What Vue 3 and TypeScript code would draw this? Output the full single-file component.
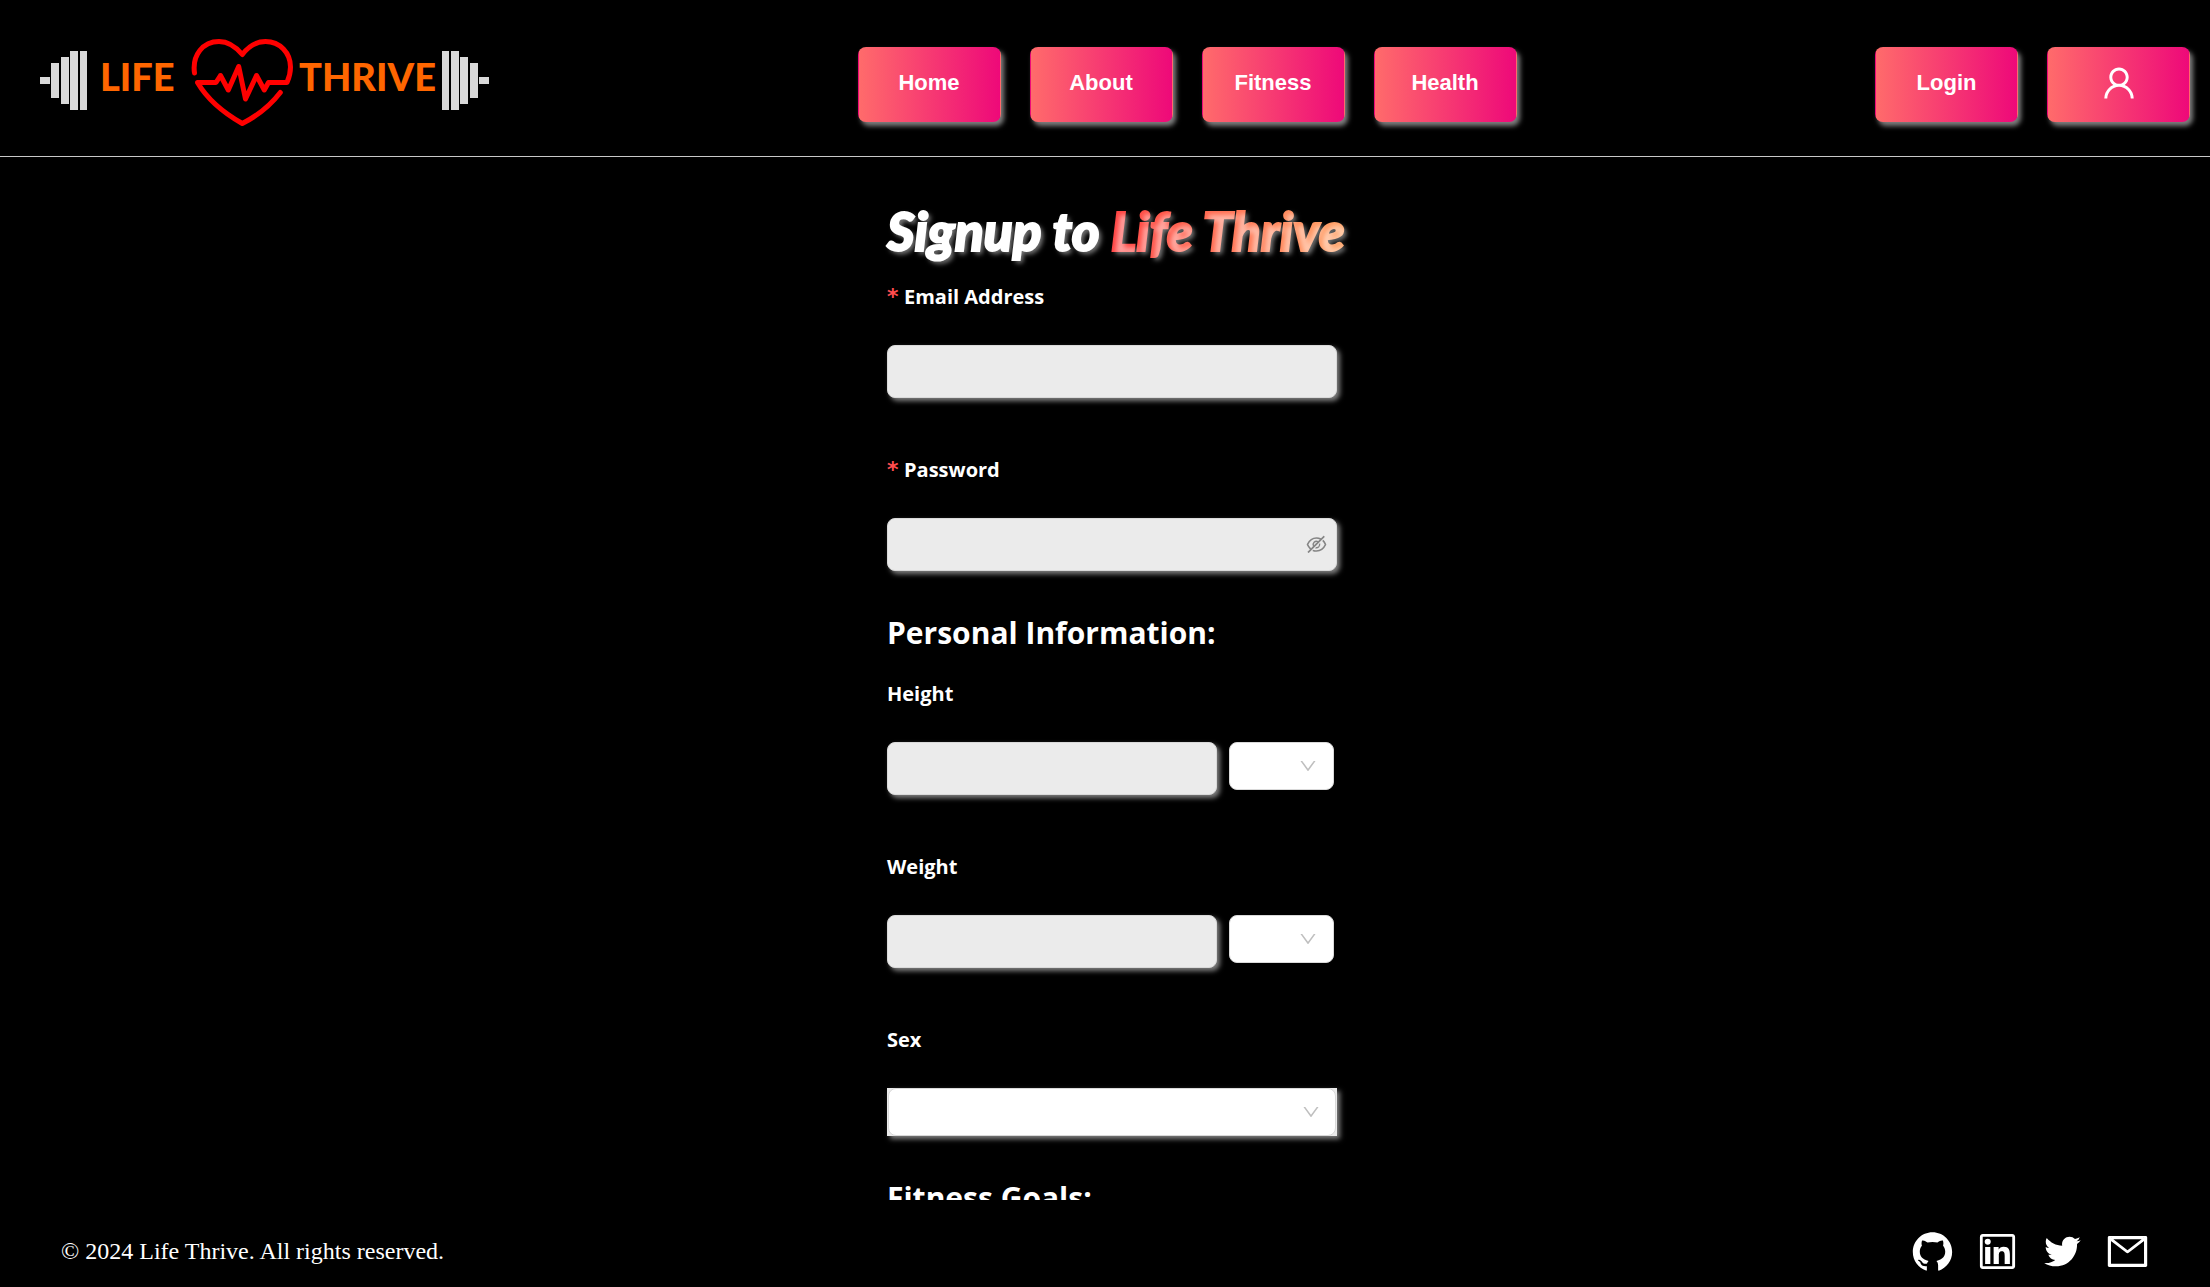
<script setup lang="ts">
import { ref } from 'vue'

interface SocialLink {
  label: string
  path: string
}

const navItems: string[] = ['Home', 'About', 'Fitness', 'Health']

const measures = ref([
  { id: 'height', label: 'Height', value: '', unit: '', units: ['cm', 'in'] },
  { id: 'weight', label: 'Weight', value: '', unit: '', units: ['kg', 'lb'] },
])

const email = ref('')
const password = ref('')
const showPassword = ref(false)
const sex = ref('')

const arrowPath =
  'M884 256h-75c-5.1 0-9.9 2.5-12.9 6.6L512 654.2 227.9 262.6c-3-4.1-7.8-6.6-12.9-6.6h-75c-6.5 0-10.3 7.4-6.5 12.7l352.6 486.1c12.8 17.6 39 17.6 51.7 0l352.6-486.1c3.9-5.3.1-12.7-6.4-12.7z'

const socials: SocialLink[] = [
  {
    label: 'GitHub',
    path: 'M511.6 76.3C264.3 76.2 64 276.4 64 523.5 64 718.9 189.3 885 363.8 946c23.5 5.9 19.9-10.8 19.9-22.2v-77.5c-135.7 15.9-141.2-73.9-150.3-88.9C215 726 171.5 718 184.5 703c30.9-15.9 62.4 4 98.9 57.9 26.4 39.1 77.9 32.5 104 26 5.7-23.5 17.9-44.5 34.7-60.8-140.6-25.2-199.2-111-199.2-213 0-49.5 16.3-95 48.3-131.7-20.4-60.5 1.9-112.3 4.9-120 58.1-5.2 118.5 41.6 123.2 45.3 33-8.9 70.7-13.6 112.9-13.6 42.4 0 80.2 4.9 113.5 13.9 11.3-8.6 67.3-48.8 121.3-43.9 2.9 7.7 24.7 58.3 5.5 118 32.4 36.8 48.9 82.7 48.9 132.3 0 102.2-59 188.1-200 212.9a127.5 127.5 0 0138.1 91v112.5c.8 9 0 17.9 15 17.9 177.1-59.7 304.6-227 304.6-424.1 0-247.2-200.4-447.3-447.5-447.3z',
  },
  {
    label: 'LinkedIn',
    path: 'M847.7 112H176.3c-35.5 0-64.3 28.8-64.3 64.3v671.4c0 35.5 28.8 64.3 64.3 64.3h671.4c35.5 0 64.3-28.8 64.3-64.3V176.3c0-35.5-28.8-64.3-64.3-64.3zm0 736c-447.8-.1-671.7-.2-671.7-.3.1-447.8.2-671.7.3-671.7 447.8.1 671.7.2 671.7.3-.1 447.8-.2 671.7-.3 671.7zM230.6 411.9h118.7v381.8H230.6zm59.4-52.2c37.9 0 68.8-30.8 68.8-68.8a68.8 68.8 0 10-137.6 0c-.1 38 30.7 68.8 68.8 68.8zm252.3 245.1c0-49.8 9.5-98 71.2-98 60.8 0 61.7 56.9 61.7 101.2v185.7h118.6V584.3c0-102.8-22.2-181.9-142.3-181.9-57.7 0-96.4 31.7-112.3 61.7h-1.6v-52.2H423.7v381.8h118.6V604.8z',
  },
  {
    label: 'Twitter',
    path: 'M928 254.3c-30.6 13.2-63.9 22.7-98.2 26.4a170.1 170.1 0 0075-94 336.64 336.64 0 01-108.2 41.2A170.1 170.1 0 00672 174c-94.5 0-170.5 76.6-170.5 170.6 0 13.2 1.6 26.4 4.2 39.1-141.5-7.4-267.7-75-351.6-178.5a169.32 169.32 0 00-23.2 86.1c0 59.2 30.1 111.4 76 142.1a172 172 0 01-77.1-21.7v2.1c0 82.9 58.6 151.6 136.7 167.4a180.6 180.6 0 01-44.9 5.8c-11.1 0-21.6-1.1-32.2-2.6C211 652 273.9 701.1 348.8 702.7c-58.6 45.9-132 72.9-211.7 72.9-14.3 0-27.5-.5-41.2-2.1C171.5 822 261.2 850 357.8 850 671.4 850 843 590.2 843 364.7c0-7.4 0-14.8-.5-22.2 33.2-24.3 62.3-54.4 85.5-88.2z',
  },
  {
    label: 'Email',
    path: 'M928 160H96c-17.7 0-32 14.3-32 32v640c0 17.7 14.3 32 32 32h832c17.7 0 32-14.3 32-32V192c0-17.7-14.3-32-32-32zm-40 110.8V792H136V270.8l-27.6-21.5 39.3-50.5 42.8 33.3h643.1l42.8-33.3 39.3 50.5-27.7 21.5zM833.6 232L512 482 190.4 232l-42.8-33.3-39.3 50.5 27.6 21.5 341.6 265.6a55.99 55.99 0 0068.7 0L888 270.8l27.6-21.5-39.3-50.5-42.7 33.2z',
  },
]
</script>

<template>
  <div class="page">
    <header class="header">
      <svg class="logo" viewBox="20 36 479 97" role="img" aria-label="Life Thrive">
        <g fill="#d9d9d9">
          <rect x="40" y="77" width="10" height="7" />
          <rect x="51" y="63" width="8" height="35" />
          <rect x="61" y="57" width="8" height="47" />
          <rect x="70" y="51" width="8" height="59" />
          <rect x="80" y="51" width="7" height="59" />
          <rect x="442" y="51" width="7" height="59" />
          <rect x="451" y="51" width="8" height="59" />
          <rect x="460" y="57" width="8" height="47" />
          <rect x="470" y="63" width="8" height="35" />
          <rect x="479" y="77" width="10" height="7" />
        </g>
        <text class="logo-text" x="100" y="91">LIFE</text>
        <text class="logo-text" x="299" y="91">THRIVE</text>
        <path
          fill="none"
          stroke="#ff0000"
          stroke-width="5"
          stroke-linecap="round"
          stroke-linejoin="round"
          d="M194.5 73C192 55 203 41.500 219 41.500C229 41.500 236 47 242.300 54.500C248 47 256 41.500 265.500 41.500C280 41.500 290.500 53 290.500 67C290.500 73 289.500 77 287 82.500H268.500L264.300 90L256.500 75.500L245.500 99L238.700 66.500L228.300 90L220.500 75.500L216 82.500H197.500C206 97 222 112 242.300 123.500C257 116 270 106 280.300 92.500"
        />
      </svg>
      <nav class="group">
        <button v-for="item in navItems" :key="item" type="button" class="pill">{{ item }}</button>
      </nav>
      <div class="group">
        <button type="button" class="pill">Login</button>
        <button type="button" class="pill" aria-label="Account">
          <svg class="user-icon" viewBox="0 0 1024 1024">
            <path
              fill="currentColor"
              d="M858.5 763.6a374 374 0 00-80.6-119.5 375.63 375.63 0 00-119.5-80.6c-.4-.2-.8-.3-1.2-.5C719.5 518 760 444.7 760 362c0-137-111-248-248-248S264 225 264 362c0 82.7 40.5 156 102.8 201.1-.4.2-.8.3-1.2.5-44.8 18.9-85 46-119.5 80.6a375.63 375.63 0 00-80.6 119.5A371.7 371.7 0 00136 901.8a8 8 0 008 8.2h60c4.400 0 7.900-3.500 8-7.800 2-77.200 33-149.500 87.800-204.300 56.700-56.700 132-87.900 212.200-87.900s155.500 31.200 212.200 87.900C779 752.700 810 825 812 902.200c.1 4.400 3.600 7.800 8 7.800h60a8 8 0 008-8.200c-1-47.800-10.900-94.300-29.500-138.200zM512 534c-45.900 0-89.100-17.900-121.600-50.400S340 407.900 340 362c0-45.900 17.900-89.100 50.400-121.600S466.100 190 512 190s89.100 17.900 121.600 50.400S684 316.100 684 362c0 45.900-17.900 89.100-50.400 121.600S557.900 534 512 534z"
            />
          </svg>
        </button>
      </div>
    </header>

    <main class="main">
      <form class="form" @submit.prevent>
        <h1 class="title">Signup to <span class="brand">Life Thrive</span></h1>

        <div class="field">
          <label class="label required" for="email">Email Address</label>
          <input id="email" v-model="email" class="input" type="email" required />
        </div>

        <div class="field">
          <label class="label required" for="password">Password</label>
          <div class="control">
            <input
              id="password"
              v-model="password"
              class="input"
              :type="showPassword ? 'text' : 'password'"
              required
            />
            <button
              type="button"
              class="eye"
              aria-label="Toggle password visibility"
              @click="showPassword = !showPassword"
            >
              <svg viewBox="0 0 1024 1024">
                <path
                  fill="currentColor"
                  d="M942.2 486.2Q889.47 375.11 816.7 305l-50.88 50.88C807.31 395.53 843.45 447.4 874.7 512 791.5 684.2 673.4 766 512 766q-72.67 0-133.87-22.38L323 798.75Q408 838 512 838q288.3 0 430.2-300.3a60.29 60.29 0 000-51.5zm-63.57-320.64L836 122.88a8 8 0 00-11.32 0L715.31 232.2Q624.86 186 512 186q-288.3 0-430.2 300.3a60.3 60.3 0 000 51.5q56.69 119.4 136.5 191.41L112.48 835a8 8 0 000 11.31L155.17 889a8 8 0 0011.31 0l712.15-712.12a8 8 0 000-11.32zM149.3 512C232.6 339.8 350.7 258 512 258c54.54 0 104.13 9.36 149.12 28.39l-70.3 70.3a176 176 0 00-238.13 238.13l-83.42 83.42C223.1 637.49 183.3 582.28 149.3 512zm246.7 0a112.11 112.11 0 01146.2-106.69L401.31 546.2A112 112 0 01396 512z"
                />
                <path
                  fill="currentColor"
                  d="M508 624c-3.46 0-6.87-.16-10.25-.47l-52.82 52.82a176.09 176.09 0 00227.42-227.42l-52.82 52.82c.31 3.38.47 6.79.47 10.25a111.94 111.94 0 01-112 112z"
                />
              </svg>
            </button>
          </div>
        </div>

        <h2 class="heading">Personal Information:</h2>

        <div v-for="m in measures" :key="m.id" class="field">
          <label class="label" :for="m.id">{{ m.label }}</label>
          <div class="row">
            <input :id="m.id" v-model="m.value" class="input" type="text" />
            <div class="control unit">
              <select v-model="m.unit" class="select" :aria-label="m.label + ' unit'">
                <option value=""></option>
                <option v-for="u in m.units" :key="u" :value="u">{{ u }}</option>
              </select>
              <svg class="arrow" viewBox="0 0 1024 1024" aria-hidden="true"><path :d="arrowPath" /></svg>
            </div>
          </div>
        </div>

        <div class="field">
          <label class="label" for="sex">Sex</label>
          <div class="control framed">
            <select id="sex" v-model="sex" class="select">
              <option value=""></option>
              <option value="female">Female</option>
              <option value="male">Male</option>
            </select>
            <svg class="arrow" viewBox="0 0 1024 1024" aria-hidden="true"><path :d="arrowPath" /></svg>
          </div>
        </div>

        <h2 class="heading">Fitness Goals:</h2>
      </form>
    </main>

    <footer class="footer">
      <p class="copyright">© 2024 Life Thrive. All rights reserved.</p>
      <div class="socials">
        <a v-for="s in socials" :key="s.label" href="#" class="social" :aria-label="s.label">
          <svg viewBox="0 0 1024 1024"><path fill="currentColor" :d="s.path" /></svg>
        </a>
      </div>
    </footer>
  </div>
</template>

<style>
body {
  margin: 0;
  background: #000;
}
</style>

<style scoped>
.page {
  --glow: 3px 3px 5px rgba(255, 255, 255, 0.5);
  display: flex;
  flex-direction: column;
  height: 100vh;
  background: #000;
  color: #fff;
  font-family: 'Open Sans', 'Noto Sans', sans-serif;
}

.page *,
.page *::before {
  box-sizing: border-box;
}

.header {
  display: flex;
  flex: none;
  align-items: center;
  justify-content: space-between;
  padding: 36px 20px 23px;
  border-bottom: 1px solid #c8c8c8;
}

.logo {
  width: 479px;
  height: 97px;
}

.logo-text {
  fill: #ff6600;
  font-family: Lato, sans-serif;
  font-size: 38px;
  font-weight: 900;
}

.group {
  display: flex;
  gap: 29px;
}

.pill {
  display: flex;
  align-items: center;
  justify-content: center;
  width: 143px;
  height: 75px;
  padding: 0 0 3px;
  border: 1px solid transparent;
  border-radius: 8px;
  background-image: linear-gradient(to right, #ff6b6b, #ee0979);
  box-shadow: 3px 4px 5px rgba(255, 255, 255, 0.5);
  color: #fff;
  font-family: 'Liberation Sans', Arial, sans-serif;
  font-size: 22px;
  font-weight: 700;
  cursor: pointer;
}

.user-icon {
  width: 40px;
  height: 40px;
}

.main {
  flex: 1;
  min-height: 0;
  padding-left: 14px;
  overflow-y: auto;
  scrollbar-width: none;
}

.form {
  width: 450px;
  margin: 0 auto;
}

.title {
  margin: 0;
  padding: 44px 0 4px;
  font-family: Lato, sans-serif;
  font-size: 53px;
  font-style: italic;
  font-weight: 900;
  line-height: 60px;
  white-space: nowrap;
  text-shadow: var(--glow);
  -webkit-text-stroke: 2px currentColor;
}

.brand {
  background: linear-gradient(to right, #ff4040, #ffa366);
  background-clip: text;
  -webkit-background-clip: text;
  color: transparent;
}

.field {
  padding: 17px 0 40px;
}

.field:has(+ .heading) {
  padding-bottom: 0;
}

.label {
  display: block;
  height: 30px;
  margin-bottom: 33px;
  font-size: 20px;
  font-weight: 700;
  line-height: 30px;
}

.required::before {
  content: '*';
  display: inline-block;
  width: 17px;
  color: #ff4d4f;
  font-family: 'DejaVu Sans', sans-serif;
  font-size: 22px;
  line-height: 1;
}

.input {
  display: block;
  width: 100%;
  height: 53px;
  padding: 0 12px;
  border: 1px solid #d9d9d9;
  border-radius: 8px;
  background: #ebebeb;
  box-shadow: var(--glow);
  font-size: 20px;
}

.control {
  position: relative;
}

.eye {
  position: absolute;
  top: 15px;
  right: 9px;
  width: 23px;
  height: 23px;
  padding: 0;
  border: 0;
  background: none;
  color: #858585;
  cursor: pointer;
}

.eye svg,
.social svg {
  display: block;
  width: 100%;
  height: 100%;
}

.row {
  display: flex;
  gap: 12px;
  padding-right: 3px;
}

.row .input {
  flex: 1;
  min-width: 0;
}

.unit {
  width: 105px;
}

.select {
  display: block;
  width: 100%;
  height: 48px;
  padding: 0 40px 0 12px;
  border: 1px solid #d9d9d9;
  border-radius: 8px;
  appearance: none;
  background: #fff;
  font-size: 20px;
}

.arrow {
  position: absolute;
  top: 14px;
  right: 16px;
  width: 20px;
  height: 20px;
  fill: #bfbfbf;
  pointer-events: none;
}

.framed {
  padding: 0 1px;
  background: #ebebeb;
  box-shadow: var(--glow);
}

.heading {
  margin: 0;
  padding: 40px 0 7px;
  font-size: 30px;
  font-weight: 700;
  line-height: 44px;
}

.footer {
  display: flex;
  flex: none;
  align-items: center;
  justify-content: space-between;
  height: 87px;
  padding: 16px 60px 0 61px;
}

.copyright {
  margin: 0;
  font-family: 'Liberation Serif', 'Times New Roman', serif;
  font-size: 24px;
}

.socials {
  display: flex;
  gap: 20px;
}

.social {
  width: 45px;
  height: 45px;
  color: #fff;
}
</style>
